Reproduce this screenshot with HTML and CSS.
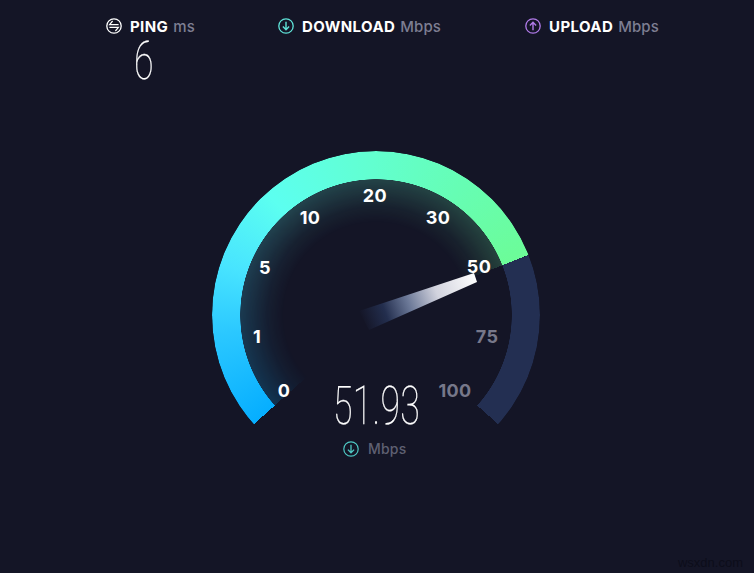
FILE: index.html
```
<!DOCTYPE html>
<html lang="en">
<head>
<meta charset="utf-8">
<title>Speedtest</title>
<link rel="stylesheet" href="styles.css">
</head>
<body>
<main class="page">
  <section class="stats">
    <div class="stat">
      <div class="stat-head">
        <svg class="icon" viewBox="0 0 16 16"><circle cx="8" cy="8" r="7.2" fill="none" stroke="#fff" stroke-width="1.3"/><path d="M6.6 3 3.6 6.6H12.6M9.4 13 12.4 9.4H3.4" fill="none" stroke="#fff" stroke-width="1.2"/></svg>
        <span class="stat-name">PING</span><span class="stat-unit">ms</span>
      </div>
      <div class="stat-value"><span class="thin-digits">6</span></div>
    </div>
    <div class="stat">
      <div class="stat-head">
        <svg class="icon" viewBox="0 0 16 16"><circle cx="8" cy="8" r="7.2" fill="none" stroke="#5fe3d8" stroke-width="1.3"/><path d="M8 3.8V11.6M4.9 8.6 8 11.8 11.1 8.6" fill="none" stroke="#5fe3d8" stroke-width="1.4"/></svg>
        <span class="stat-name">DOWNLOAD</span><span class="stat-unit">Mbps</span>
      </div>
    </div>
    <div class="stat">
      <div class="stat-head">
        <svg class="icon" viewBox="0 0 16 16"><circle cx="8" cy="8" r="7.2" fill="none" stroke="#b07ae8" stroke-width="1.3"/><path d="M8 12.2V4.4M4.9 7.4 8 4.2 11.1 7.4" fill="none" stroke="#b07ae8" stroke-width="1.4"/></svg>
        <span class="stat-name">UPLOAD</span><span class="stat-unit">Mbps</span>
      </div>
    </div>
  </section>

  <section class="gauge">
    <div class="gauge-glow"></div>
    <div class="gauge-track"></div>
    <div class="gauge-fill"></div>
    <svg class="needle" viewBox="0 0 328 328">
      <defs>
        <linearGradient id="needle-fade" gradientUnits="userSpaceOnUse" x1="265" y1="127" x2="150" y2="169">
          <stop offset="0" stop-color="#ffffff"/>
          <stop offset="0.35" stop-color="#d2d3de"/>
          <stop offset="0.6" stop-color="#6a7796"/>
          <stop offset="0.8" stop-color="#232e4e"/>
          <stop offset="1" stop-color="#141526"/>
        </linearGradient>
      </defs>
      <polygon points="262,122 265,131 157,179 147,160" fill="url(#needle-fade)"/>
    </svg>
    <span class="tick tick-0">0</span>
    <span class="tick tick-1">1</span>
    <span class="tick tick-5">5</span>
    <span class="tick tick-10">10</span>
    <span class="tick tick-20">20</span>
    <span class="tick tick-30">30</span>
    <span class="tick tick-50">50</span>
    <span class="tick tick-muted tick-75">75</span>
    <span class="tick tick-muted tick-100">100</span>
    <div class="readout">
      <div class="readout-value"><span class="thin-digits thin-wide">51.93</span></div>
      <div class="readout-unit">
        <svg class="icon" viewBox="0 0 16 16"><circle cx="8" cy="8" r="7.2" fill="none" stroke="#4fc9c4" stroke-width="1.2"/><path d="M8 3.8V11.6M4.9 8.6 8 11.8 11.1 8.6" fill="none" stroke="#4fc9c4" stroke-width="1.3"/></svg>
        <span>Mbps</span>
      </div>
    </div>
  </section>
  <footer class="credit">wsxdn.com</footer>
</main>
</body>
</html>
```
FILE: styles.css
```
* { box-sizing: border-box; }
html, body { margin: 0; padding: 0; background: #141526; }
body { width: 754px; height: 573px; overflow: hidden; }

.page {
  position: relative;
  width: 754px;
  height: 573px;
  background: #141526;
  font-family: Inter, "Liberation Sans", sans-serif;
  color: #fff;
}

.stats {
  display: grid;
  grid-template-columns: 172px 247px auto;
  height: 151px;
  padding: 18px 0 0 106px;
}
.stat-head { display: flex; align-items: center; height: 16px; }
.icon { width: 16px; height: 16px; flex: none; }
.stat-name { margin-left: 8px; font-size: 15px; font-weight: 700; letter-spacing: 0.4px; }
.stat-unit { margin-left: 5px; font-size: 15px; font-weight: 500; letter-spacing: 0.1px; color: #7d7e92; }
.stat-value { height: 40px; margin: 7px 0 0 28px; }

.thin-digits {
  display: inline-block;
  font-family: Roboto, sans-serif;
  font-weight: 100;
  font-size: 54px;
  line-height: 40px;
  transform-origin: 0 50%;
  transform: scaleX(0.66);
  -webkit-text-stroke: 0.25px #fff;
}
.thin-wide { letter-spacing: 0.4px; }

.gauge { position: relative; width: 328px; height: 328px; margin-left: 212px; }
.gauge-track, .gauge-fill, .gauge-glow, .needle { position: absolute; inset: 0; width: 328px; height: 328px; border-radius: 50%; }
.gauge-fill, .gauge-track {
  -webkit-mask-image: radial-gradient(circle at center, transparent 135.5px, #000 136px);
  mask-image: radial-gradient(circle at center, transparent 135.5px, #000 136px);
}
.gauge-fill {
  background: conic-gradient(from 228.2deg, #06aeff 0deg, #2bc8ff 35deg, #48e4ff 60deg, #5cfff0 90deg, #62ffd0 130deg, #66fdb4 165deg, #6cfc98 200.3deg, transparent 200.3deg);
}
.gauge-track {
  background: conic-gradient(from 68.5deg, #232f52 0deg, #232f52 63.3deg, transparent 63.3deg);
}
.gauge-glow {
  background: conic-gradient(from 228.2deg, #06aeff 0deg, #2bc8ff 35deg, #48e4ff 60deg, #5cfff0 90deg, #62ffd0 130deg, #66fdb4 165deg, #6cfc98 200.3deg, transparent 200.3deg);
  -webkit-mask-image: radial-gradient(circle at center, transparent 92px, rgba(0,0,0,0.05) 108px, rgba(0,0,0,0.2) 136px, transparent 136.5px);
  mask-image: radial-gradient(circle at center, transparent 92px, rgba(0,0,0,0.05) 108px, rgba(0,0,0,0.2) 136px, transparent 136.5px);
}

.tick {
  position: absolute;
  transform: translate(-50%, -50%);
  font-size: 18px;
  font-weight: 700;
  line-height: 18px;
  letter-spacing: 0.4px;
  color: #fff;
}
.tick-muted { color: #77788a; }
.tick-0 { left: 72px; top: 240px; }
.tick-1 { left: 45px; top: 186px; }
.tick-5 { left: 53px; top: 117px; }
.tick-10 { left: 98px; top: 67px; }
.tick-20 { left: 163px; top: 45px; }
.tick-30 { left: 226px; top: 67px; }
.tick-50 { left: 267px; top: 116px; }
.tick-75 { left: 275px; top: 186px; }
.tick-100 { left: 243px; top: 240px; }

.readout { position: absolute; left: 114px; top: 235px; width: 100px; }
.readout-value { height: 40px; margin-left: 7px; }
.readout-unit { display: flex; align-items: center; margin: 14px 0 0 17px; font-size: 14px; font-weight: 500; letter-spacing: 0.2px; color: #5f6072; }
.readout-unit span { margin-left: 9px; }

.credit {
  position: absolute;
  right: 11px;
  bottom: 3px;
  font-family: "Liberation Sans", sans-serif;
  font-size: 13px;
  color: #0c0d1a;
}
```
